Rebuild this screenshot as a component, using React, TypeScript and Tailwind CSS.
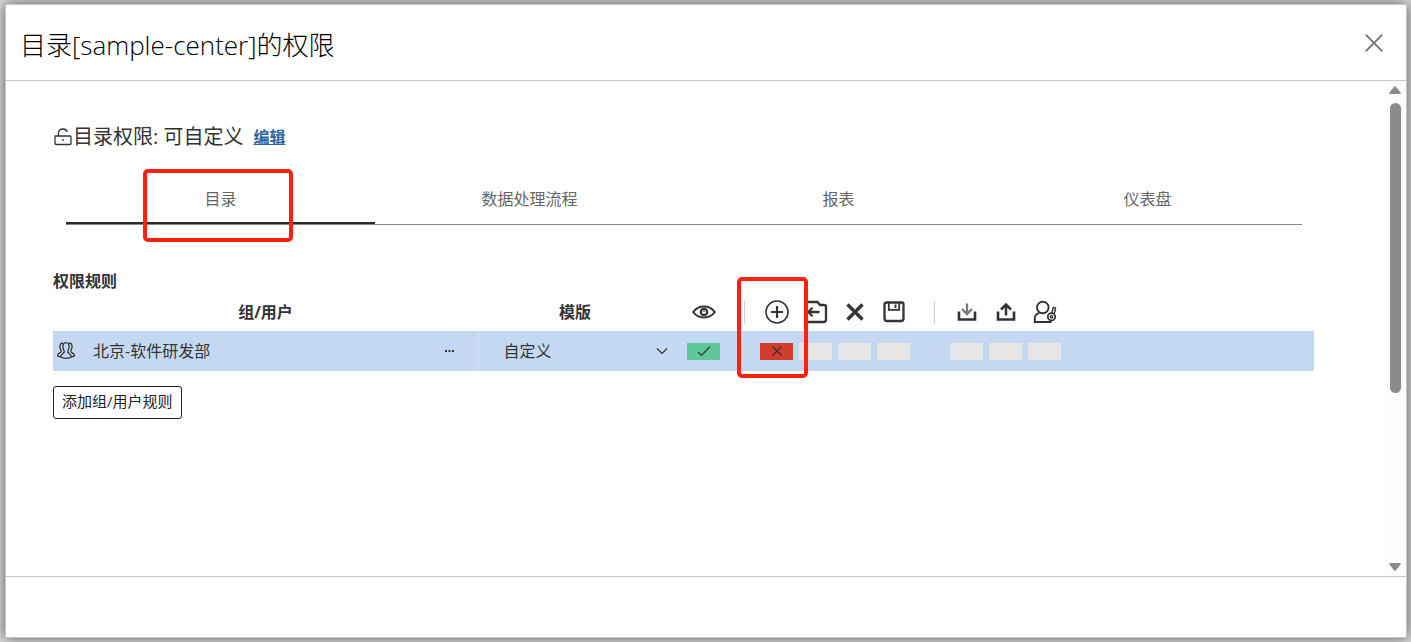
import type { ReactNode } from "react";

const tabs = ["目录", "数据处理流程", "报表", "仪表盘"];

function Svg({ label, className = "", size = 24, sw = 2, children }: { label?: string; className?: string; size?: number; sw?: number; children: ReactNode }) {
  return (
    <svg
      role={label ? "img" : undefined}
      aria-label={label}
      aria-hidden={label ? undefined : true}
      width={size}
      height={size}
      viewBox={`0 0 ${size} ${size}`}
      fill="none"
      stroke="currentColor"
      strokeWidth={sw}
      className={`block shrink-0 ${className}`}
    >
      {children}
    </svg>
  );
}

const EyeIcon = () => (
  <Svg label="读取" className="mx-auto">
    <path d="M1.2 12C6.5 4.6 17.5 4.6 22.800 12C17.500 19.400 6.500 19.400 1.200 12Z" strokeWidth={2} />
    <circle cx="12" cy="12" r="3.200" strokeWidth={2.200} />
    <path d="M12 10.600v1.400" strokeWidth={1.200} />
  </Svg>
);
const PlusIcon = () => (
  <Svg label="新建" className="mx-auto">
    <circle cx="12" cy="12" r="11" strokeWidth={1.600} />
    <path d="M12 6v12M6 12h12" strokeWidth={2.200} />
  </Svg>
);
const EditIcon = () => (
  <Svg label="修改" className="mx-auto" sw={2.300}>
    <path d="M2 9V4.500Q2 2 4.500 2H13.500L16 5H20Q22 5 22 7V19.500Q22 22 19.500 22H4.500Q2 22 2 19.500V15" />
    <path d="M15.500 12H4.500M8.500 7.800L4.300 12L8.500 16.200" />
  </Svg>
);
const DeleteIcon = () => (
  <Svg label="删除" className="mx-auto">
    <path d="M4.500 4.500L19.500 19.500M19.500 4.500L4.500 19.500" strokeWidth={3.200} />
  </Svg>
);
const SaveIcon = () => (
  <Svg label="保存" className="mx-auto" sw={2.300}>
    <path d="M2.500 4.500Q2.500 2.500 4.500 2.500H19.500Q21.500 2.500 21.500 4.500V18.500Q21.500 21 19 21H5Q2.500 21 2.500 18.500Z" />
    <path d="M6.800 3V9.800H17.200V3" strokeWidth={1.800} />
    <path d="M13.500 4.500V8" strokeWidth={2} />
  </Svg>
);
const DownloadIcon = () => (
  <Svg label="导入" className="mx-auto">
    <path d="M4 11.500V19.500H20V11.500" strokeWidth={2.600} />
    <path d="M12 3.500V13.500M7 9L12 14L17 9" className="text-[#777]" stroke="currentColor" strokeWidth={2.300} />
  </Svg>
);
const UploadIcon = () => (
  <Svg label="导出" className="mx-auto">
    <path d="M4 11.500V19.500H20V11.500" strokeWidth={2.600} />
    <path d="M12 15.500V4.500M7 9.500L12 4.500L17 9.500" strokeWidth={2.500} />
  </Svg>
);
const UserKeyIcon = () => (
  <Svg label="授权" className="mx-auto">
    <circle cx="9.800" cy="7.500" r="5.800" strokeWidth={1.900} />
    <path d="M6.500 12.800Q1.800 14.500 1.800 18V22H18.500" strokeWidth={1.900} />
    <circle cx="18.500" cy="16.800" r="3.700" strokeWidth={1.800} />
    <circle cx="18.500" cy="16.800" r="1.200" strokeWidth={1.400} />
    <path d="M18.800 13.200L20.300 7.300L22.500 8L21.800 10.500L22.300 11L20.800 14" strokeWidth={1.400} />
  </Svg>
);

type Column = { name: string; icon?: () => ReactNode; state?: "allow" | "deny" | "none" };

const columns: Column[] = [
  { name: "读取", icon: EyeIcon, state: "allow" },
  { name: "sep-1" },
  { name: "新建", icon: PlusIcon, state: "deny" },
  { name: "修改", icon: EditIcon, state: "none" },
  { name: "删除", icon: DeleteIcon, state: "none" },
  { name: "保存", icon: SaveIcon, state: "none" },
  { name: "sep-2" },
  { name: "导入", icon: DownloadIcon, state: "none" },
  { name: "导出", icon: UploadIcon, state: "none" },
  { name: "授权", icon: UserKeyIcon, state: "none" },
];

const stateClass = { allow: "bg-[#5fc898]", deny: "bg-[#d43c2e]", none: "bg-[#e6e6e6]" };

function PermissionButton({ name, state }: { name: string; state: "allow" | "deny" | "none" }) {
  return (
    <button type="button" aria-label={name} className={`mx-auto flex h-[17px] w-[33px] items-center justify-center ${stateClass[state]}`}>
      {state === "allow" && (
        <Svg size={14} sw={1.2}><path d="M1 8L4.500 11.500L13 2.500" /></Svg>
      )}
      {state === "deny" && (
        <Svg size={10} sw={1.2}><path d="M0.500 0.500L9.500 9.500M9.500 0.500L0.500 9.500" /></Svg>
      )}
    </button>
  );
}

function Highlight({ className }: { className: string }) {
  return <span aria-hidden="true" className={`pointer-events-none absolute z-10 rounded-[5px] border-4 border-[#ff2010] ${className}`} />;
}

function RulesTable() {
  return (
    <table className="w-full table-fixed border-collapse text-base">
      <colgroup>
        <col className="w-[425px]" />
        <col className="w-[206px]" />
        {columns.map((c) => <col key={c.name} className={c.icon ? "w-[39px]" : "w-[34px]"} />)}
        <col />
      </colgroup>
      <thead>
        <tr className="h-[38px]">
          <th scope="col" className="p-0 font-bold">组/用户</th>
          <th scope="col" className="p-0 pr-3 font-bold">模版</th>
          {columns.map((c) => (
            <th key={c.name} className={c.icon ? "relative p-0" : "p-0 pl-2"}>
              {c.icon ? <c.icon /> : <span className="mx-auto block h-[23px] w-px bg-[#d0d0d0]" />}
              {c.name === "新建" && <Highlight className="-top-4 -left-5 h-[101px] w-[71px]" />}
            </th>
          ))}
          <td />
        </tr>
      </thead>
      <tbody>
        <tr className="h-10 bg-[#c4d9f1]">
          <td className="border-r border-[#e0e0e0] p-0">
            <div className="flex items-center pr-5 pl-[3px]">
              <Svg size={20} sw={1.3}>
                <path d="M7 2.300C4.500 1.800 3.700 4 4 6.500C4.200 8.300 5.300 9 5.200 10.300C4.800 12 1.800 12 1.500 14.700C2.300 15.600 3.500 15.600 4.500 15.500" />
                <path d="M13 2.300C15.500 1.800 16.300 4 16 6.500C15.800 8.300 14.700 9 14.800 10.300C15.200 12 18.200 12 18.500 14.700C17.700 15.600 16.500 15.600 15.500 15.500" />
                <path d="M10 1.700C7.500 1.700 6.700 4 7 6.500C7.200 8.500 8.300 9.500 8.200 11C7.800 12.800 4.800 13 4.500 16C7 17.700 13 17.700 15.500 16C15.200 13 12.200 12.800 11.800 11C11.700 9.500 12.800 8.500 13 6.500C13.300 4 12.500 1.700 10 1.700Z" />
              </Svg>
              <span className="ml-[17px] flex-1">北京-软件研发部</span>
              <button type="button" aria-label="选择组或用户" className="p-1">
                <svg width="9" height="2" viewBox="0 0 9 2" className="block fill-current"><path d="M0 0h2v2h-2zM3.500 0h2v2h-2zM7 0h2v2h-2z" /></svg>
              </button>
            </div>
          </td>
          <td className="relative p-0">
            <select aria-label="模版" className="block h-10 w-full appearance-none bg-transparent pl-[25px]">
              <option>自定义</option>
            </select>
            <Svg size={12} sw={1.2} className="pointer-events-none absolute top-3.5 right-4"><path d="M1 3.500L6 8.500L11 3.500" /></Svg>
          </td>
          {columns.map((c) => (
            <td key={c.name} className={c.icon ? "p-0" : "p-0 pl-2"}>
              {c.state ? <PermissionButton name={c.name} state={c.state} /> : <span className="mx-auto block h-[19px] w-px bg-[#d0d4d8]" />}
            </td>
          ))}
          <td />
        </tr>
      </tbody>
    </table>
  );
}

export default function App() {
  return (
    <div className="flex min-h-screen bg-[#d8d8d8] pt-1 pr-1 pb-1 pl-[5px] font-['Open_Sans','Noto_Sans_CJK_SC',sans-serif] text-[#333]">
      <section role="dialog" aria-labelledby="dialog-title" className="flex flex-1 flex-col rounded-xs border border-[#c8c8c8] bg-white shadow-[0_0_14px_rgba(0,0,0,0.6)]">
        <header className="flex h-19 items-center justify-between border-b border-[#c8c8c8] pr-[23px] pl-3.5">
          <h1 id="dialog-title" className="pt-1 text-[26px] leading-9 font-light text-black">目录[sample-center]的权限</h1>
          <button type="button" aria-label="关闭" className="text-[#777]">
            <Svg size={18} sw={1.9}><path d="M0.700 0.700L17.300 17.300M17.300 0.700L0.700 17.300" /></Svg>
          </button>
        </header>

        <div className="flex flex-1">
          <main className="flex-1 pr-[71px] pl-[47px]">
            <div className="flex items-center pt-10 text-xl leading-8">
              <Svg size={20} sw={1.300}>
                <path d="M2.500 9H17Q18 9 18 10V16.500Q18 17.500 17 17.500H3Q2 17.500 2 16.500V9.500Q2 9 2.500 9Z" />
                <path d="M5.500 9V6Q5.500 2 10 2Q13.500 2 14.300 5" />
                <path d="M10 12V14" />
              </Svg>
              <span>目录权限: 可自定义</span>
              <a href="#edit" className="ml-2.5 text-base font-semibold text-[#34649c] underline">编辑</a>
            </div>

            <div role="tablist" className="mt-5 mr-3 ml-[13px] grid grid-cols-4 border-b border-[#888]">
              {tabs.map((tab, i) => (
                <button
                  key={tab}
                  type="button"
                  role="tab"
                  aria-selected={i === 0}
                  className={`relative h-[51px] border-b-2 pt-0.5 text-base text-[#666] ${i === 0 ? "border-[#2b2b2b]" : "border-transparent"}`}
                >
                  {tab}
                  {i === 0 && <Highlight className="-top-1 left-1/4 h-[73px] w-[150px]" />}
                </button>
              ))}
            </div>

            <h2 className="mt-11 text-base leading-6 font-bold">权限规则</h2>
            <RulesTable />
            <button type="button" className="mt-[15px] h-[33px] rounded-[3px] border border-[#222] px-2 pb-0.5 text-[15px] text-[#222]">添加组/用户规则</button>
          </main>

          <div aria-hidden="true" className="flex w-[21px] flex-col items-center bg-[#fcfcfc] pt-[5px] pr-px pb-[5px] text-[#8b8b8b]">
            <svg width="12" height="8" viewBox="0 0 12 8" className="block fill-current"><path d="M5 .7Q6 -.3 7 .7L11.500 6.500Q12 8 10.500 8H1.500Q0 8 .5 6.500Z" /></svg>
            <span className="mt-[9px] h-[290px] w-[11px] rounded-full bg-[#8b8b8b]" />
            <svg width="12" height="8" viewBox="0 0 12 8" className="mt-auto block fill-current"><path d="M5 7.300Q6 8.300 7 7.300L11.500 1.500Q12 0 10.500 0H1.500Q0 0 .5 1.500Z" /></svg>
          </div>
        </div>

        <footer className="h-[61px] border-t border-[#c8c8c8]" />
      </section>
    </div>
  );
}
